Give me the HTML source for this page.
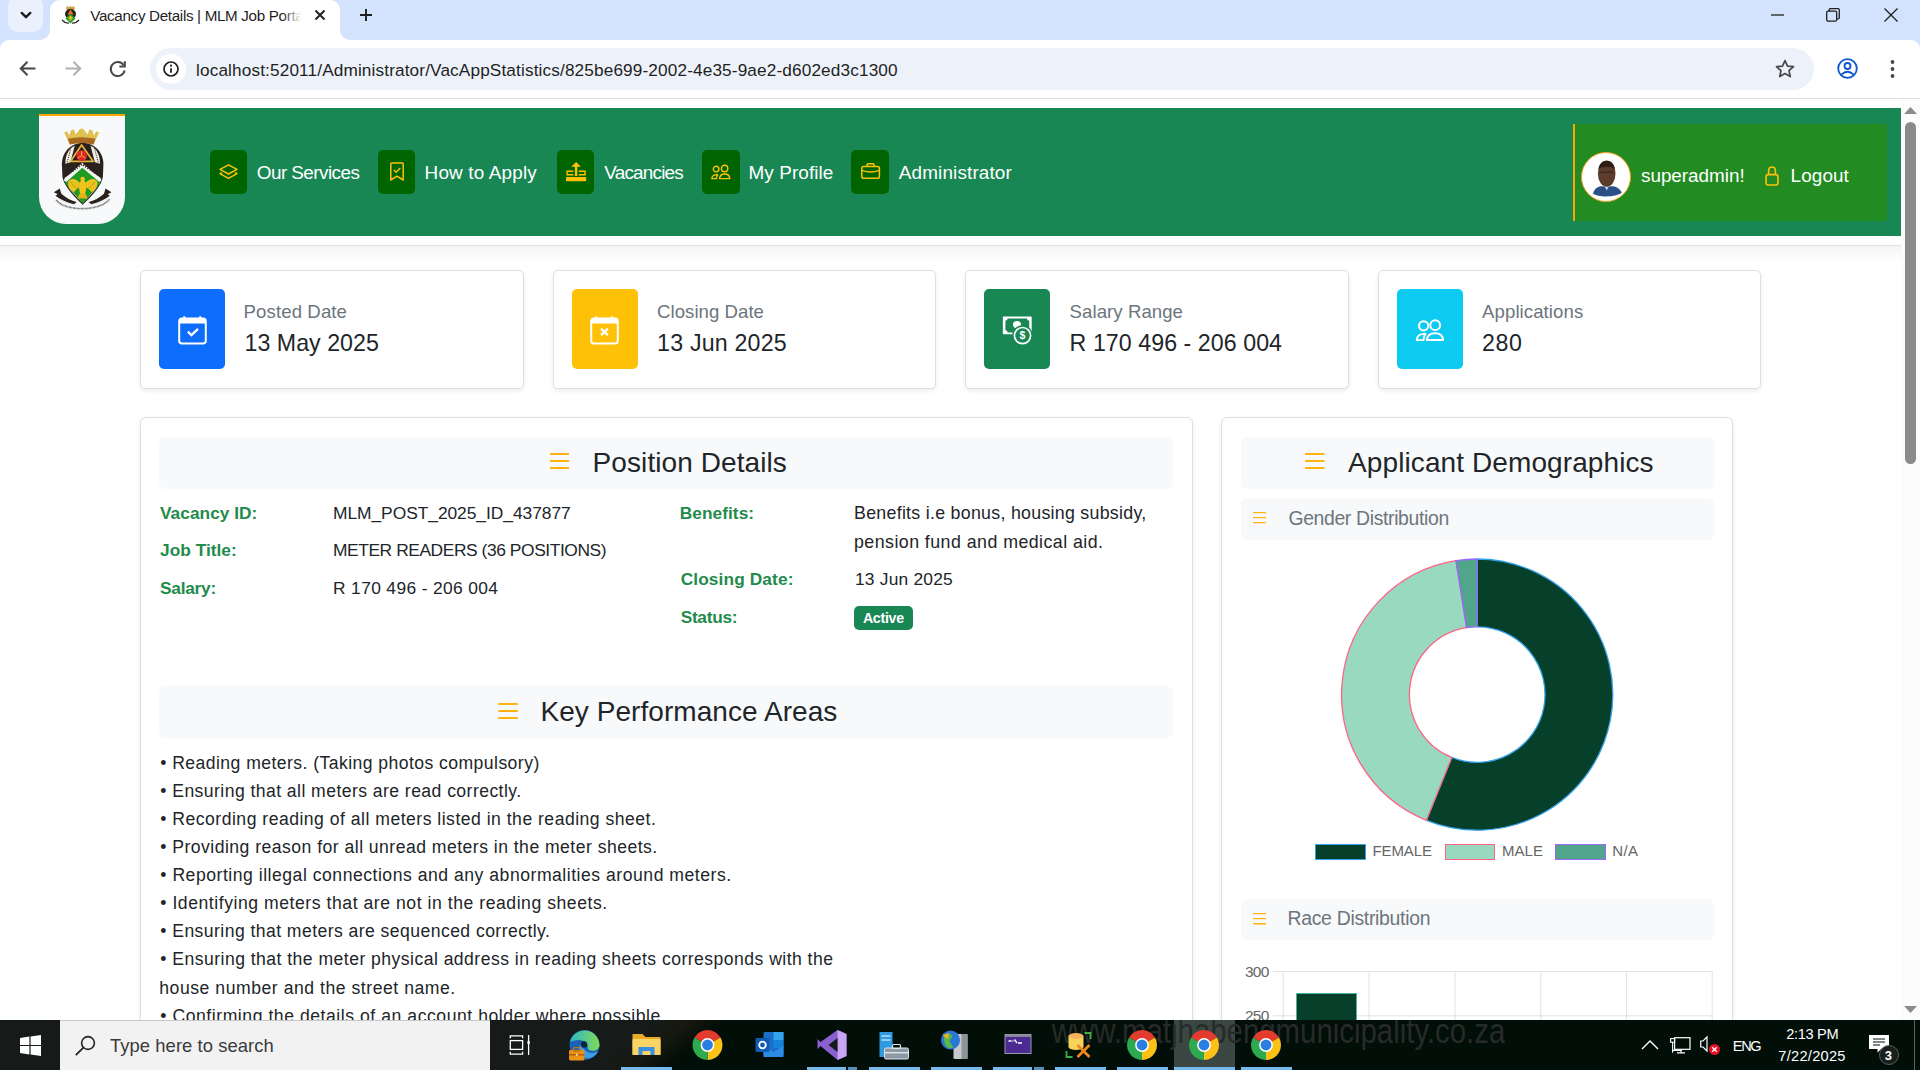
<!DOCTYPE html>
<html lang="en"><head><meta charset="utf-8"><title>Vacancy Details | MLM Job Portal</title>
<style>
*{box-sizing:border-box;margin:0;padding:0}
html,body{width:1920px;height:1070px;overflow:hidden;background:#fff}
body{position:relative;font-family:"Liberation Sans",sans-serif}
.t{position:absolute;white-space:nowrap;font-family:"Liberation Sans",sans-serif}
.a{position:absolute}
svg{position:absolute;overflow:visible}
</style></head>
<body>
<div class="a" id="navbar" style="left:0;top:108px;width:1901px;height:128px;background:#198754"></div>
<div class="a" style="left:0;top:245px;width:1901px;height:1px;background:#dfe2e6"></div>
<div class="a" style="left:0;top:246px;width:1901px;height:16px;background:linear-gradient(#f4f4f5,#fff)"></div>
<div class="a" id="logo" style="left:39px;top:114px;width:86px;height:110px;background:#f8f9fa;border-top:2px solid #ffa500;border-radius:0 0 27px 27px"></div>
<svg id="crest" style="left:40px;top:115px" width="85" height="110" viewBox="0 0 827 1070"><path d="M235 170 L262 158 L287 200 L300 150 L330 138 L347 190 L385 140 L405 128 L425 140 L463 190 L480 138 L510 150 L523 200 L548 158 L575 170 L520 288 Q405 255 290 288Z" fill="#dfc050"/><path d="M270 232 Q405 200 540 232 L520 288 Q405 255 290 288Z" fill="#a9681f"/><path d="M213 480 C213 360 300 272 415 272 C530 272 617 360 617 480 L612 600 Q596 705 415 872 Q234 705 218 600Z" fill="#2a211d"/><path d="M246 475 Q244 385 300 322 L338 300 L296 460Z" fill="#f3f0e8"/><path d="M584 475 Q586 385 530 322 L492 300 L534 460Z" fill="#f3f0e8"/><path d="M300 322 L262 470 M530 322 L568 470" stroke="#2a211d" stroke-width="9" stroke-dasharray="12 10" fill="none"/><path d="M238 612 L410 492 L592 612 Q580 700 415 856 Q250 700 238 612Z" fill="#f6f6f4"/><path d="M236 640 L410 478 L594 640" stroke="#f6f6f4" stroke-width="20" stroke-dasharray="15 11" fill="none"/><path d="M405 292 L518 452 H296Z" fill="none" stroke="#e3b53b" stroke-width="17" stroke-linejoin="round"/><circle cx="405" cy="395" r="52" fill="#e3262c"/><path d="M405 352 V395 L368 420 M405 395 L442 420" stroke="#f0c23c" stroke-width="9" fill="none"/><path d="M412 512 L590 662 L415 862 L244 662Z" fill="#1f9b22"/><path d="M398 668 C352 618 300 606 274 650 C268 702 298 742 332 748 C352 722 380 704 398 704Z" fill="#e9c31d"/><path d="M432 668 C478 618 530 606 558 650 C564 702 534 742 500 748 C480 722 452 704 432 704Z" fill="#e9c31d"/><ellipse cx="415" cy="705" rx="34" ry="78" fill="#f0c419"/><circle cx="415" cy="622" r="22" fill="#f0c419"/><path d="M383 765 H447 L462 812 H368Z" fill="#e2b417"/><path d="M300 650 C320 690 345 710 370 715 M532 650 C512 690 487 710 462 715" stroke="#c4950f" stroke-width="8" fill="none"/><path d="M135 752 L192 715 L208 765 C250 805 305 832 358 846 L330 868 C260 850 200 825 150 785 L172 772Z" fill="#2a211d"/><path d="M695 752 L638 715 L622 765 C580 805 525 832 472 846 L500 868 C570 850 630 825 680 785 L658 772Z" fill="#2a211d"/><path d="M128 815 C220 962 610 962 702 805 M168 802 C252 905 578 905 664 796" stroke="#c9c9c9" stroke-width="3" fill="none"/><path d="M158 826 C245 940 585 940 676 818" stroke="#555" stroke-width="15" stroke-dasharray="8 5" fill="none"/></svg>
<div class="a" style="left:210px;top:150px;width:37px;height:44px;border-radius:5px;background:#006400"></div>
<svg style="left:219.4px;top:164.1px" width="19" height="15" viewBox="0 0 19 15"><path d="M9.5 0.8 L18 5.4 L9.5 10 L1 5.4Z M3 8.6 L1 9.7 L9.5 14.3 L18 9.7 L16 8.6" fill="none" stroke="#ffc107" stroke-width="1.5" stroke-linejoin="round"/></svg>
<span id="t0" class="t" style="left:256.8px;top:162px;font-size:18.9px;line-height:21px;color:#fff;letter-spacing:-0.557px;">Our Services</span>
<div class="a" style="left:378px;top:150px;width:37px;height:44px;border-radius:5px;background:#006400"></div>
<svg style="left:388.9px;top:162.1px" width="16" height="19" viewBox="0 0 16 19"><path d="M2.5 1 H13.5 Q14.2 1 14.2 1.8 V18 L8 14.2 L1.8 18 V1.8 Q1.8 1 2.5 1Z" fill="none" stroke="#ffc107" stroke-width="1.5" stroke-linejoin="round"/><path d="M4.9 8 L7.1 10.2 L11.3 5.9" fill="none" stroke="#ffc107" stroke-width="1.5"/></svg>
<span id="t1" class="t" style="left:424.6px;top:162px;font-size:18.9px;line-height:21px;color:#fff;letter-spacing:0.177px;">How to Apply</span>
<div class="a" style="left:557px;top:150px;width:37px;height:44px;border-radius:5px;background:#006400"></div>
<svg style="left:565.8px;top:162.0px" width="20.2" height="19.2" viewBox="0 0 20.2 19.2"><path d="M10.1 0 L14.9 4.7 H11.3 V14 H8.9 V4.7 H5.3Z" fill="#ffc107"/><path d="M7.4 9.3 H1.1 V12.7 H7.4 M12.8 9.3 H19.1 V12.7 H12.8" fill="none" stroke="#ffc107" stroke-width="1.4"/><rect x="0" y="14.9" width="20.2" height="4.3" rx="1" fill="#ffc107"/></svg>
<span id="t2" class="t" style="left:604.3px;top:162px;font-size:18.9px;line-height:21px;color:#fff;letter-spacing:-0.789px;">Vacancies</span>
<div class="a" style="left:702px;top:150px;width:38px;height:44px;border-radius:5px;background:#006400"></div>
<svg style="left:711.4px;top:163.6px" width="20" height="16" viewBox="0 0 20 16"><circle cx="5.1" cy="5.1" r="2.8" fill="none" stroke="#ffc107" stroke-width="1.4"/><circle cx="13.6" cy="4.5" r="3.2" fill="none" stroke="#ffc107" stroke-width="1.4"/><path d="M8.6 14.6 C8.8 11.6 10.8 10 13.7 10 C16.6 10 18.6 11.6 18.8 14.6Z" fill="none" stroke="#ffc107" stroke-width="1.4" stroke-linejoin="round"/><path d="M6.4 10.7 C3 10.7 1 12.2 0.8 14.6 H5.6 C5.6 13 5.9 11.8 6.8 10.7Z" fill="none" stroke="#ffc107" stroke-width="1.3" stroke-linejoin="round"/></svg>
<span id="t3" class="t" style="left:748.5px;top:162px;font-size:18.9px;line-height:21px;color:#fff;letter-spacing:0.092px;">My Profile</span>
<div class="a" style="left:851px;top:150px;width:38px;height:44px;border-radius:5px;background:#006400"></div>
<svg style="left:860.9px;top:163.0px" width="19" height="16" viewBox="0 0 19 16"><rect x="0.8" y="3.6" width="17.6" height="11.6" rx="1.8" fill="none" stroke="#ffc107" stroke-width="1.5"/><path d="M6.2 3.4 V1.6 Q6.2 0.8 7 0.8 H12.2 Q13 0.8 13 1.6 V3.4" fill="none" stroke="#ffc107" stroke-width="1.5"/><path d="M1 7.4 Q9.6 10.6 18.2 7.4" fill="none" stroke="#ffc107" stroke-width="1.4"/></svg>
<span id="t4" class="t" style="left:898.8px;top:162px;font-size:18.9px;line-height:21px;color:#fff;letter-spacing:0.143px;">Administrator</span>
<div class="a" id="userbox" style="left:1573px;top:124px;width:314px;height:97px;background:#228b22;border-left:2px solid #ffa500"></div>
<div class="a" style="left:1581px;top:152px;width:50px;height:50px;border-radius:25px;background:#fff;border:1.5px solid #f0a31c"></div>
<svg style="left:1590px;top:158px" width="32" height="40" viewBox="0 0 32 40"><path d="M3 35.5 C5 28.6 10 27.2 16.7 28.8 C23 27.2 29 28.6 31.8 34.6 C27 39.4 8 39.8 3 35.5Z" fill="#2b4f86"/><path d="M13.4 26 L16.7 32.5 L20 26Z" fill="#cfd5e2"/><ellipse cx="16.7" cy="15.8" rx="8.8" ry="13" fill="#5c3c2d"/><path d="M8.4 11 C9.4 5.4 12.6 2.8 16.7 2.8 C20.8 2.8 24 5.4 25 11 C21 8 12.4 8 8.4 11Z" fill="#2c1d17"/><path d="M10 14.2 H23.4" stroke="#33221a" stroke-width="1"/></svg>
<span id="t5" class="t" style="left:1641.0px;top:165px;font-size:18.9px;line-height:21px;color:#fff;letter-spacing:-0.031px;">superadmin!</span>
<svg style="left:1765px;top:166px" width="14" height="20" viewBox="0 0 14 20"><rect x="1" y="8.6" width="12" height="10.4" rx="2.2" fill="none" stroke="#ffc107" stroke-width="1.6"/><path d="M3.6 8.6 V5 Q3.6 1 7 1 Q10.4 1 10.4 5 V8.6" fill="none" stroke="#ffc107" stroke-width="1.6"/></svg>
<span id="t6" class="t" style="left:1790.6px;top:165px;font-size:18.9px;line-height:21px;color:#fff;letter-spacing:0.094px;">Logout</span>
<div class="a" style="left:140.0px;top:270px;width:383.5px;height:119px;background:#fff;border:1px solid #dcdfe3;border-radius:5px;box-shadow:0 2px 5px rgba(0,0,0,.075)"></div>
<div class="a" style="left:159.0px;top:289px;width:66px;height:80px;border-radius:5px;background:#0d6efd"></div>
<svg style="left:177.7px;top:315.8px" width="28.6" height="28.4" viewBox="0 0 28.6 28.4"><path d="M6.3 0.2 V2.4 M22.2 0.2 V2.4" stroke="#fff" stroke-width="2"/><rect x="1.2" y="2.6" width="26.6" height="24.9" rx="2.8" fill="none" stroke="#fff" stroke-width="2"/><path d="M1.2 7.4 V5.2 Q1.2 2.6 4 2.6 H25 Q27.8 2.6 27.8 5.2 V7.4Z" fill="#fff"/><path d="M9.9 15.6 L13.4 19.1 L20 12.8" fill="none" stroke="#fff" stroke-width="2.3"/></svg>
<span id="t7" class="t" style="left:243.6px;top:301px;font-size:18.6px;line-height:21px;color:#6c757d;letter-spacing:0.101px;">Posted Date</span>
<span id="t8" class="t" style="left:244.6px;top:330px;font-size:23.2px;line-height:26px;color:#212529;letter-spacing:0.013px;">13 May 2025</span>
<div class="a" style="left:552.5px;top:270px;width:383.5px;height:119px;background:#fff;border:1px solid #dcdfe3;border-radius:5px;box-shadow:0 2px 5px rgba(0,0,0,.075)"></div>
<div class="a" style="left:571.5px;top:289px;width:66px;height:80px;border-radius:5px;background:#ffc107"></div>
<svg style="left:590.2px;top:315.8px" width="28.6" height="28.4" viewBox="0 0 28.6 28.4"><path d="M6.3 0.2 V2.4 M22.2 0.2 V2.4" stroke="#fff" stroke-width="2"/><rect x="1.2" y="2.6" width="26.6" height="24.9" rx="2.8" fill="none" stroke="#fff" stroke-width="2"/><path d="M1.2 7.4 V5.2 Q1.2 2.6 4 2.6 H25 Q27.8 2.6 27.8 5.2 V7.4Z" fill="#fff"/><path d="M11.1 12.7 L17.9 19.1 M17.9 12.7 L11.1 19.1" fill="none" stroke="#fff" stroke-width="2.3"/></svg>
<span id="t9" class="t" style="left:657.1px;top:301px;font-size:18.6px;line-height:21px;color:#6c757d;letter-spacing:0.035px;">Closing Date</span>
<span id="t10" class="t" style="left:657.1px;top:330px;font-size:23.2px;line-height:26px;color:#212529;letter-spacing:0.195px;">13 Jun 2025</span>
<div class="a" style="left:965.0px;top:270px;width:383.5px;height:119px;background:#fff;border:1px solid #dcdfe3;border-radius:5px;box-shadow:0 2px 5px rgba(0,0,0,.075)"></div>
<div class="a" style="left:984.0px;top:289px;width:66px;height:80px;border-radius:5px;background:#198754"></div>
<svg style="left:1002.0px;top:315.5px" width="30" height="29" viewBox="0 0 30 29"><rect x="0.85" y="0.5" width="28.85" height="17.7" rx="0.8" fill="#fff"/><path d="M5.6 2.4 H25 Q25 4.6 27.2 4.6 V14.2 Q25 14.2 25 16.4 H5.6 Q5.6 14.2 3.4 14.2 V4.6 Q5.6 4.6 5.6 2.4Z" fill="#198754"/><ellipse cx="15" cy="8.6" rx="4" ry="3.7" fill="#fff"/><circle cx="20.5" cy="19.6" r="10.3" fill="#198754"/><circle cx="20.5" cy="19.6" r="8.1" fill="none" stroke="#fff" stroke-width="1.7"/><text x="20.5" y="23.4" text-anchor="middle" font-family="Liberation Sans, sans-serif" font-weight="700" font-size="10.5" fill="#fff">$</text></svg>
<span id="t11" class="t" style="left:1069.6px;top:301px;font-size:18.6px;line-height:21px;color:#6c757d;letter-spacing:0.062px;">Salary Range</span>
<span id="t12" class="t" style="left:1069.6px;top:330px;font-size:23.2px;line-height:26px;color:#212529;letter-spacing:0.054px;">R 170 496 - 206 004</span>
<div class="a" style="left:1377.5px;top:270px;width:383.5px;height:119px;background:#fff;border:1px solid #dcdfe3;border-radius:5px;box-shadow:0 2px 5px rgba(0,0,0,.075)"></div>
<div class="a" style="left:1396.5px;top:289px;width:66px;height:80px;border-radius:5px;background:#0dcaf0"></div>
<svg style="left:1415.0px;top:318.5px" width="29" height="23" viewBox="0 0 29 23"><circle cx="8.6" cy="6.8" r="4.6" fill="none" stroke="#fff" stroke-width="2"/><circle cx="20.2" cy="6.2" r="4.9" fill="none" stroke="#fff" stroke-width="2"/><path d="M11.8 21.1 C12.2 16.6 15.4 14.2 20 14.2 C24.6 14.2 27.8 16.6 28.1 21.1Z" fill="none" stroke="#fff" stroke-width="2" stroke-linejoin="round"/><path d="M9.4 14.9 C4.6 14.9 2 17.4 1.7 21.1 H8.6 C8.6 18.6 9.2 16.6 10.4 14.9Z" fill="none" stroke="#fff" stroke-width="1.9" stroke-linejoin="round"/></svg>
<span id="t13" class="t" style="left:1482.1px;top:301px;font-size:18.6px;line-height:21px;color:#6c757d;letter-spacing:0.076px;">Applications</span>
<span id="t14" class="t" style="left:1482.1px;top:330px;font-size:23.2px;line-height:26px;color:#212529;letter-spacing:0.504px;">280</span>
<div class="a" id="panelL" style="left:140px;top:417px;width:1052.5px;height:700px;background:#fff;border:1px solid #dcdfe3;border-radius:6px;box-shadow:0 2px 5px rgba(0,0,0,.075)"></div>
<div class="a" style="left:159px;top:437px;width:1014px;height:51.5px;background:#f8f9fa;border-radius:6px"></div>
<svg style="left:0;top:0" width="1" height="1"><path d="M550.0 454.00 H569.0 M550.0 461.00 H569.0 M550.0 468.00 H569.0 " stroke="#ffb30f" stroke-width="2" fill="none"/></svg>
<span id="t15" class="t" style="left:592.6px;top:447px;font-size:28px;line-height:31px;color:#212529;letter-spacing:0.081px;">Position Details</span>
<span id="t16" class="t" style="left:160.0px;top:503px;font-size:17.3px;line-height:20px;color:#1f8b4c;font-weight:700;letter-spacing:0.033px;">Vacancy ID:</span>
<span id="t17" class="t" style="left:333.0px;top:503px;font-size:17.4px;line-height:20px;color:#212529;letter-spacing:-0.051px;">MLM_POST_2025_ID_437877</span>
<span id="t18" class="t" style="left:160.0px;top:540px;font-size:17.3px;line-height:20px;color:#1f8b4c;font-weight:700;letter-spacing:0.029px;">Job Title:</span>
<span id="t19" class="t" style="left:333.0px;top:540px;font-size:17.4px;line-height:20px;color:#212529;letter-spacing:-0.428px;">METER READERS (36 POSITIONS)</span>
<span id="t20" class="t" style="left:160.0px;top:578px;font-size:17.3px;line-height:20px;color:#1f8b4c;font-weight:700;letter-spacing:-0.248px;">Salary:</span>
<span id="t21" class="t" style="left:333.0px;top:578px;font-size:17.4px;line-height:20px;color:#212529;letter-spacing:0.356px;">R 170 496 - 206 004</span>
<span id="t22" class="t" style="left:679.7px;top:503px;font-size:17.3px;line-height:20px;color:#1f8b4c;font-weight:700;letter-spacing:0.053px;">Benefits:</span>
<span id="t23" class="t" style="left:854.0px;top:503px;font-size:17.8px;line-height:20px;color:#212529;letter-spacing:0.282px;">Benefits i.e bonus, housing subsidy,</span>
<span id="t24" class="t" style="left:854.0px;top:532px;font-size:17.8px;line-height:20px;color:#212529;letter-spacing:0.456px;">pension fund and medical aid.</span>
<span id="t25" class="t" style="left:680.7px;top:569px;font-size:17.3px;line-height:20px;color:#1f8b4c;font-weight:700;letter-spacing:0.115px;">Closing Date:</span>
<span id="t26" class="t" style="left:855.0px;top:569px;font-size:17.4px;line-height:20px;color:#212529;letter-spacing:0.194px;">13 Jun 2025</span>
<span id="t27" class="t" style="left:680.7px;top:607px;font-size:17.3px;line-height:20px;color:#1f8b4c;font-weight:700;letter-spacing:-0.302px;">Status:</span>
<div class="a" style="left:854px;top:606px;width:59px;height:24px;border-radius:5px;background:#198754"></div>
<span id="t28" class="t" style="left:862.9px;top:610px;font-size:14.2px;line-height:16px;color:#fff;font-weight:700;letter-spacing:-0.279px;">Active</span>
<div class="a" style="left:159px;top:686px;width:1014px;height:51.5px;background:#f8f9fa;border-radius:6px"></div>
<svg style="left:0;top:0" width="1" height="1"><path d="M498.3 704.00 H517.8 M498.3 711.00 H517.8 M498.3 718.00 H517.8 " stroke="#ffb30f" stroke-width="2" fill="none"/></svg>
<span id="t29" class="t" style="left:540.5px;top:696px;font-size:28px;line-height:31px;color:#212529;letter-spacing:0.058px;">Key Performance Areas</span>
<span id="t30" class="t" style="left:160.3px;top:753px;font-size:17.6px;line-height:20px;color:#212529;letter-spacing:0.437px;">• Reading meters. (Taking photos compulsory)</span>
<span id="t31" class="t" style="left:160.3px;top:781px;font-size:17.6px;line-height:20px;color:#212529;letter-spacing:0.435px;">• Ensuring that all meters are read correctly.</span>
<span id="t32" class="t" style="left:160.3px;top:809px;font-size:17.6px;line-height:20px;color:#212529;letter-spacing:0.488px;">• Recording reading of all meters listed in the reading sheet.</span>
<span id="t33" class="t" style="left:160.3px;top:837px;font-size:17.6px;line-height:20px;color:#212529;letter-spacing:0.470px;">• Providing reason for all unread meters in the meter sheets.</span>
<span id="t34" class="t" style="left:160.3px;top:865px;font-size:17.6px;line-height:20px;color:#212529;letter-spacing:0.516px;">• Reporting illegal connections and any abnormalities around meters.</span>
<span id="t35" class="t" style="left:160.3px;top:893px;font-size:17.6px;line-height:20px;color:#212529;letter-spacing:0.545px;">• Identifying meters that are not in the reading sheets.</span>
<span id="t36" class="t" style="left:160.3px;top:921px;font-size:17.6px;line-height:20px;color:#212529;letter-spacing:0.434px;">• Ensuring that meters are sequenced correctly.</span>
<span id="t37" class="t" style="left:160.3px;top:949px;font-size:17.6px;line-height:20px;color:#212529;letter-spacing:0.459px;">• Ensuring that the meter physical address in reading sheets corresponds with the</span>
<span id="t38" class="t" style="left:159.3px;top:978px;font-size:17.6px;line-height:20px;color:#212529;letter-spacing:0.536px;">house number and the street name.</span>
<span id="t39" class="t" style="left:160.3px;top:1006px;font-size:17.6px;line-height:20px;color:#212529;letter-spacing:0.546px;">• Confirming the details of an account holder where possible</span>
<div class="a" id="panelR" style="left:1221px;top:417px;width:511.5px;height:700px;background:#fff;border:1px solid #dcdfe3;border-radius:6px;box-shadow:0 2px 5px rgba(0,0,0,.075)"></div>
<div class="a" style="left:1241px;top:437px;width:473px;height:51.5px;background:#f8f9fa;border-radius:6px"></div>
<svg style="left:0;top:0" width="1" height="1"><path d="M1305.0 454.00 H1324.5 M1305.0 461.00 H1324.5 M1305.0 468.00 H1324.5 " stroke="#ffb30f" stroke-width="2" fill="none"/></svg>
<span id="t40" class="t" style="left:1348.1px;top:447px;font-size:28px;line-height:31px;color:#212529;letter-spacing:0.096px;">Applicant Demographics</span>
<div class="a" style="left:1241px;top:498px;width:473px;height:41.5px;background:#f8f9fa;border-radius:6px"></div>
<svg style="left:0;top:0" width="1" height="1"><path d="M1253.0 512.55 H1266.0 M1253.0 517.55 H1266.0 M1253.0 522.55 H1266.0 " stroke="#ffb30f" stroke-width="1.3" fill="none"/></svg>
<span id="t41" class="t" style="left:1288.4px;top:507px;font-size:19.4px;line-height:22px;color:#6c757d;letter-spacing:-0.348px;">Gender Distribution</span>
<svg id="donut" style="left:0;top:0" width="1" height="1"><path d="M1477.20 559.00 A135.6 135.6 0 1 1 1426.40 820.33 L1451.80 757.46 A67.8 67.8 0 1 0 1477.20 626.80Z" fill="#063f2a" stroke="#36a2eb" stroke-width="1.3" stroke-linejoin="round"/><path d="M1426.40 820.33 A135.6 135.6 0 0 1 1455.99 560.67 L1466.59 627.63 A67.8 67.8 0 0 0 1451.80 757.46Z" fill="#98d9c0" stroke="#ff6384" stroke-width="1.3" stroke-linejoin="round"/><path d="M1455.99 560.67 A135.6 135.6 0 0 1 1477.20 559.00 L1477.20 626.80 A67.8 67.8 0 0 0 1466.59 627.63Z" fill="#50a58a" stroke="#9966ff" stroke-width="1.3" stroke-linejoin="round"/></svg>
<div class="a" style="left:1315.3px;top:843.5px;width:50.5px;height:16px;background:#063f2a;border:1.3px solid #36a2eb"></div>
<span id="t42" class="t" style="left:1372.4px;top:842px;font-size:15px;line-height:17px;color:#666;letter-spacing:-0.082px;">FEMALE</span>
<div class="a" style="left:1444.8px;top:843.5px;width:50.5px;height:16px;background:#98d9c0;border:1.3px solid #ff6384"></div>
<span id="t43" class="t" style="left:1501.9px;top:842px;font-size:15px;line-height:17px;color:#666;letter-spacing:0.053px;">MALE</span>
<div class="a" style="left:1555.3px;top:843.5px;width:50.5px;height:16px;background:#50a58a;border:1.3px solid #9966ff"></div>
<span id="t44" class="t" style="left:1612.3px;top:842px;font-size:15px;line-height:17px;color:#666;letter-spacing:0.400px;">N/A</span>
<div class="a" style="left:1241px;top:899px;width:473px;height:41px;background:#f8f9fa;border-radius:6px"></div>
<svg style="left:0;top:0" width="1" height="1"><path d="M1253.0 913.55 H1266.0 M1253.0 918.65 H1266.0 M1253.0 923.75 H1266.0 " stroke="#ffb30f" stroke-width="1.3" fill="none"/></svg>
<span id="t45" class="t" style="left:1287.5px;top:907px;font-size:19.4px;line-height:22px;color:#6c757d;letter-spacing:-0.291px;">Race Distribution</span>
<svg style="left:0;top:0" width="1" height="1"><path d="M1283.2 971 V1030 M1369.1 971 V1030 M1455.0 971 V1030 M1540.8 971 V1030 M1626.5 971 V1030 M1712.2 971 V1030 M1273 971.5 H1712.7 M1273 1015.8 H1712.7" stroke="#e2e2e2" stroke-width="1" fill="none"/></svg>
<div class="a" style="left:1296.4px;top:992.6px;width:60.4px;height:40px;background:#063f2a;border:1px solid #4bb0a0;border-bottom:0"></div>
<span id="t46" class="t" style="left:1245.0px;top:963px;font-size:15.5px;line-height:17px;color:#666;letter-spacing:-0.770px;">300</span>
<span id="t47" class="t" style="left:1245.0px;top:1007px;font-size:15.5px;line-height:17px;color:#666;letter-spacing:-0.770px;">250</span>
<div class="a" id="tabstrip" style="left:0;top:0;width:1920px;height:40px;background:#d3e3fd"></div>
<div class="a" style="left:8px;top:-4px;width:35px;height:36px;border-radius:10px;background:#eaf1fd"></div>
<svg style="left:19px;top:11px" width="14" height="9" viewBox="0 0 14 9"><path d="M2.7 1.9 L7 6.2 L11.3 1.9" fill="none" stroke="#1f1f1f" stroke-width="2.4" stroke-linecap="round" stroke-linejoin="round"/></svg>
<div class="a" style="left:50px;top:0;width:290px;height:40px;background:#fff;border-radius:10px 10px 0 0"></div>
<svg style="left:40px;top:30px" width="10" height="10" viewBox="0 0 10 10"><path d="M10 0 V10 H0 A10 10 0 0 0 10 0Z" fill="#fff"/></svg>
<svg style="left:340px;top:30px" width="10" height="10" viewBox="0 0 10 10"><path d="M0 0 V10 H10 A10 10 0 0 1 0 0Z" fill="#fff"/></svg>
<svg style="left:61px;top:5px" width="19" height="20" viewBox="0 0 19 20"><path d="M5 3 L6.5 1 L8 2.5 L9.5 0.8 L11 2.5 L12.5 1 L14 3 L13 5 H6Z" fill="#c9a13a"/><ellipse cx="9.5" cy="9" rx="5.5" ry="5" fill="#2b2320"/><path d="M9.5 4.5 L12.5 9.5 H6.5Z" fill="#e8732c"/><path d="M9.5 8.5 L14.5 13.5 L9.5 18.5 L4.5 13.5Z" fill="#2da02d"/><path d="M7.5 13 H11.5 M9.5 11 V15.5" stroke="#f0c419" stroke-width="1.6"/><path d="M1 15 Q4 18.5 8 18 M18 15 Q15 18.5 11 18" stroke="#2b2320" stroke-width="1.2" fill="none"/></svg>
<span id="t48" class="t" style="left:90.3px;top:7px;font-size:15.2px;line-height:17px;color:#1f1f1f;letter-spacing:-0.323px;">Vacancy Details | MLM Job Porta</span>
<div class="a" style="left:282px;top:4px;width:28px;height:26px;background:linear-gradient(90deg,rgba(255,255,255,0),#fff 70%)"></div>
<svg style="left:314px;top:9px" width="12" height="12" viewBox="0 0 12 12"><path d="M1.5 1.5 L10.5 10.5 M10.5 1.5 L1.5 10.5" stroke="#1f1f1f" stroke-width="1.9"/></svg>
<svg style="left:359px;top:8px" width="14" height="14" viewBox="0 0 14 14"><path d="M7 1 V13 M1 7 H13" stroke="#1f1f1f" stroke-width="1.9"/></svg>
<svg style="left:1771px;top:14px" width="13" height="2" viewBox="0 0 13 2"><path d="M0 1 H13" stroke="#1f1f1f" stroke-width="1.3"/></svg>
<svg style="left:1826px;top:8px" width="14" height="14" viewBox="0 0 14 14"><rect x="0.7" y="3.2" width="10" height="10" rx="1.5" fill="none" stroke="#1f1f1f" stroke-width="1.3"/><path d="M3.2 3 V2 Q3.2 0.7 4.5 0.7 H12 Q13.3 0.7 13.3 2 V9.5 Q13.3 10.8 12 10.8 H11" fill="none" stroke="#1f1f1f" stroke-width="1.3"/></svg>
<svg style="left:1884px;top:8px" width="14" height="14" viewBox="0 0 14 14"><path d="M0.5 0.5 L13.5 13.5 M13.5 0.5 L0.5 13.5" stroke="#1f1f1f" stroke-width="1.3"/></svg>
<div class="a" id="toolbar" style="left:0;top:40px;width:1920px;height:59px;background:#fff;border-bottom:1px solid #dadce0"></div>
<svg style="left:0;top:40px" width="9" height="9" viewBox="0 0 9 9"><path d="M0 0 H9 A9 9 0 0 0 0 9Z" fill="#d3e3fd"/></svg>
<svg style="left:1911px;top:40px" width="9" height="9" viewBox="0 0 9 9"><path d="M9 0 H0 A9 9 0 0 1 9 9Z" fill="#d3e3fd"/></svg>
<svg style="left:19px;top:60px" width="18" height="17" viewBox="0 0 18 17"><path d="M16.5 8.5 H2.5 M8.5 1.8 L1.8 8.5 L8.5 15.2" fill="none" stroke="#474747" stroke-width="2" stroke-linejoin="miter"/></svg>
<svg style="left:64px;top:60px" width="18" height="17" viewBox="0 0 18 17"><path d="M1.5 8.5 H15.5 M9.5 1.8 L16.2 8.5 L9.5 15.2" fill="none" stroke="#b0b0b0" stroke-width="2"/></svg>
<svg style="left:109px;top:60px" width="18" height="18" viewBox="0 0 18 18"><path d="M14.6 5.2 A7 7 0 1 0 15.6 10.5" fill="none" stroke="#474747" stroke-width="2"/><path d="M15.8 1.2 V6.6 H10.4" fill="none" stroke="#474747" stroke-width="2"/></svg>
<div class="a" id="omnibox" style="left:150px;top:48px;width:1664px;height:42px;border-radius:21px;background:#edf2fa"></div>
<div class="a" style="left:156px;top:54px;width:30px;height:30px;border-radius:15px;background:#fff"></div>
<svg style="left:163px;top:61px" width="16" height="16" viewBox="0 0 16 16"><circle cx="8" cy="8" r="7" fill="none" stroke="#1f1f1f" stroke-width="1.7"/><path d="M8 7.2 V11.8" stroke="#1f1f1f" stroke-width="1.8"/><circle cx="8" cy="4.7" r="1.1" fill="#1f1f1f"/></svg>
<span id="t49" class="t" style="left:196.0px;top:60px;font-size:17.2px;line-height:20px;color:#1f1f1f;letter-spacing:0.139px;">localhost:52011/Administrator/VacAppStatistics/825be699-2002-4e35-9ae2-d602ed3c1300</span>
<svg style="left:1775px;top:59px" width="20" height="19" viewBox="0 0 20 19"><path d="M10 1.6 L12.5 7.1 L18.5 7.7 L14 11.7 L15.3 17.6 L10 14.5 L4.7 17.6 L6 11.7 L1.5 7.7 L7.5 7.1Z" fill="none" stroke="#474747" stroke-width="1.7" stroke-linejoin="round"/></svg>
<svg style="left:1837px;top:58px" width="21" height="21" viewBox="0 0 21 21"><circle cx="10.5" cy="10.5" r="9.3" fill="none" stroke="#0b57d0" stroke-width="1.8"/><circle cx="10.5" cy="8" r="3" fill="none" stroke="#0b57d0" stroke-width="1.8"/><path d="M4.3 16.6 Q10.5 10.8 16.7 16.6" fill="none" stroke="#0b57d0" stroke-width="1.8"/></svg>
<svg style="left:1890px;top:59px" width="5" height="20" viewBox="0 0 5 20"><circle cx="2.5" cy="3" r="1.9" fill="#474747"/><circle cx="2.5" cy="10" r="1.9" fill="#474747"/><circle cx="2.5" cy="17" r="1.9" fill="#474747"/></svg>
<div class="a" id="vscroll" style="left:1901px;top:100px;width:19px;height:920px;background:#fcfcfc"></div>
<svg style="left:1904px;top:107px" width="13" height="7" viewBox="0 0 13 7"><path d="M0 7 L6.5 0 L13 7Z" fill="#8b8b8b"/></svg>
<svg style="left:1904px;top:1006px" width="13" height="7" viewBox="0 0 13 7"><path d="M0 0 L6.5 7 L13 0Z" fill="#8b8b8b"/></svg>
<div class="a" style="left:1905px;top:122px;width:11px;height:342px;border-radius:5.5px;background:#8b8b8b"></div>
<div class="a" id="taskbar" style="left:0;top:1020px;width:1920px;height:50px;background:#020e08"></div>
<svg style="left:0;top:1020px" width="720" height="50" viewBox="0 0 720 50"><defs><linearGradient id="tbg" x1="645" y1="7.6" x2="673" y2="42.4" gradientUnits="userSpaceOnUse"><stop offset="0" stop-color="#161b19"/><stop offset="0.5" stop-color="#17190f"/><stop offset="1" stop-color="#020e08"/></linearGradient></defs><path d="M0 0 H720 V50 H0Z" fill="url(#tbg)"/></svg>
<svg style="left:20px;top:1034.5px" width="21" height="21" viewBox="0 0 21 21"><path d="M0 3 L9.4 1.6 V9.9 H0Z M10.6 1.4 L21 0 V9.9 H10.6Z M0 11.1 H9.4 V19.4 L0 18Z M10.6 11.1 H21 V21 L10.6 19.6Z" fill="#fff"/></svg>
<div class="a" style="left:60px;top:1020px;width:430px;height:50px;background:#f2f2f2;border-top:1px solid #c8c8c8"></div>
<svg style="left:75px;top:1035px" width="21" height="21" viewBox="0 0 21 21"><circle cx="13" cy="8" r="6.4" fill="none" stroke="#222" stroke-width="1.6"/><path d="M8.4 12.6 L0.8 20.2" stroke="#222" stroke-width="1.8"/></svg>
<span id="t50" class="t" style="left:110.0px;top:1035px;font-size:18.4px;line-height:21px;color:#3a3a3a;letter-spacing:0.066px;">Type here to search</span>
<div class="a" style="left:1174px;top:1020px;width:61px;height:50px;background:#3b4742"></div>
<span id="t51" class="t" style="left:1051.5px;top:1011px;font-size:35.5px;line-height:40px;color:#262b29;transform-origin:-1.00px 50%;transform:scaleX(0.8277);clip-path:inset(9px 0 0 0);">www.matjhabengmunicipality.co.za</span>
<svg style="left:509px;top:1034px" width="22" height="22" viewBox="0 0 22 22"><path d="M1.3 4.2 V1.8 H13.6 V4.2 M1.3 17.8 V20.2 H13.6 V17.8" fill="none" stroke="#fff" stroke-width="1.3"/><rect x="1.3" y="6.6" width="12.3" height="8.8" fill="none" stroke="#fff" stroke-width="1.3"/><path d="M19.6 1 V21" stroke="#fff" stroke-width="1.3"/><rect x="18.4" y="7.2" width="2.4" height="2.6" fill="#fff"/></svg>
<svg style="left:0;top:0" width="1" height="1"><defs><linearGradient id="eg1" x1="0" y1="0" x2="1" y2="0"><stop offset="0" stop-color="#2fb6c9"/><stop offset="1" stop-color="#7fda55"/></linearGradient></defs><circle cx="584.5" cy="1045" r="15" fill="#1b62b5"/><path d="M569.9 1042 A15 15 0 0 1 599.5 1045 C599.5 1050 593.5 1052 589.0 1050 C586.5 1048.5 589.5 1045 585.5 1042 C580.5 1038.5 573.5 1040 569.9 1042Z" fill="url(#eg1)"/><path d="M581.5 1044 C576.5 1047 578.5 1056 587.5 1058.5 C592.5 1058 596.5 1055 598.0 1051.5 C592.5 1054.5 583.5 1053 581.5 1044Z" fill="#3aa0ea"/><circle cx="584.0" cy="1044.5" r="3.2" fill="#10233c"/><rect x="569.0" y="1050" width="15.5" height="10.5" rx="1.4" fill="#e8941a"/><rect x="573.5" y="1047.6" width="6.5" height="3.4" rx="1" fill="none" stroke="#c8700f" stroke-width="1.4"/><rect x="569.0" y="1054" width="15.5" height="1.5" fill="#b55f0c"/><rect x="575.9" y="1053.8" width="1.8" height="2" fill="#ffe08a"/></svg>
<svg style="left:0;top:0" width="1" height="1"><path d="M632.5 1034 H642.5 L645.5 1037 H660.5 V1055 H632.5Z" fill="#e9a928"/><rect x="632.5" y="1039" width="28" height="16" rx="1" fill="#fbd466"/><path d="M638.5 1055 V1047 H654.5 V1055 H650.5 V1051 H642.5 V1055Z" fill="#3a8fe0"/></svg>
<svg style="left:0;top:0" width="1" height="1"><path d="M707.5 1045 L694.51 1037.50 A15 15 0 0 1 720.49 1037.50Z" fill="#e33b2e"/><path d="M707.5 1045 L720.49 1037.50 A15 15 0 0 1 707.50 1060.00Z" fill="#fbc116"/><path d="M707.5 1045 L707.50 1060.00 A15 15 0 0 1 694.51 1037.50Z" fill="#2da94f"/><circle cx="707.5" cy="1045" r="6.90" fill="#fff"/><circle cx="707.5" cy="1045" r="5.40" fill="#2a7de1"/></svg>
<svg style="left:0;top:0" width="1" height="1"><rect x="763.5" y="1032" width="20" height="24" rx="1.5" fill="#1a6fc9"/><rect x="773.5" y="1032" width="10" height="8" fill="#35a4ee"/><rect x="773.5" y="1040" width="10" height="8" fill="#1583d8"/><path d="M763.5 1046 L773.5 1052 L783.5 1046 V1057 H763.5Z" fill="#2b8be6"/><rect x="755.5" y="1038" width="14" height="14" rx="1.5" fill="#0f5cb2"/><circle cx="762.5" cy="1045" r="3.3" fill="none" stroke="#fff" stroke-width="1.8"/></svg>
<svg style="left:0;top:0" width="1" height="1"><path d="M837.5 1030 L846.5 1034 V1056 L837.5 1060 L820.5 1046 L817.5 1049 V1039 L820.5 1042Z" fill="#8a5fd0"/><path d="M837.5 1030 L846.5 1034 V1056 L837.5 1060Z" fill="#c9a4f5"/><path d="M837.5 1038 L828.5 1045 L837.5 1052Z" fill="#141a17"/></svg>
<svg style="left:0;top:0" width="1" height="1"><rect x="879.5" y="1032" width="13" height="25" fill="#2f9ae0"/><rect x="881.5" y="1035" width="9" height="2" fill="#8fd0f7"/><rect x="881.5" y="1039" width="9" height="2" fill="#8fd0f7"/><rect x="884.5" y="1048" width="24" height="11" rx="1.5" fill="#8c9aa5" stroke="#dfe6ea" stroke-width="1"/><rect x="892.5" y="1044.5" width="8" height="4" rx="1" fill="none" stroke="#dfe6ea" stroke-width="1.2"/><rect x="884.5" y="1052" width="24" height="1.4" fill="#dfe6ea"/></svg>
<svg style="left:0;top:0" width="1" height="1"><rect x="953.5" y="1034" width="14" height="25" rx="1" fill="#c6c9cc"/><rect x="961.5" y="1034" width="6" height="25" fill="#8e9498"/><circle cx="950.5" cy="1040" r="9.5" fill="#2a78d4"/><path d="M944.5 1035 C950.5 1031 954.5 1037 950.5 1039 C947.5 1043 954.5 1045 952.5 1048 C946.5 1050 942.5 1043 944.5 1035Z" fill="#57b947"/><path d="M942.5 1035 L949.5 1033 L947.5 1039Z" fill="#f2b21d"/></svg>
<svg style="left:0;top:0" width="1" height="1"><rect x="1005.0" y="1034.5" width="26" height="19" fill="#4b2a91" stroke="#9a9aa6" stroke-width="1"/><rect x="1005.0" y="1034.5" width="26" height="2.4" fill="#8c8c9a"/><path d="M1008.5 1041 h3 m1 0 h1 m1 -1.5 l2.5 3.5 m1 0 h4" stroke="#fff" stroke-width="1.3" fill="none"/></svg>
<svg style="left:0;top:0" width="1" height="1"><path d="M1068.5 1036 V1047 A7.5 3 0 0 0 1083.5 1047 V1036Z" fill="#f6d35b"/><ellipse cx="1076.0" cy="1036" rx="7.5" ry="3" fill="#f3b35e"/><path d="M1084.5 1033 H1090.5 V1039 M1066.5 1051 V1057 H1072.5" fill="none" stroke="#3fae49" stroke-width="1.8"/><path d="M1077.5 1057 L1089.5 1045 M1089.5 1057 L1077.5 1045" stroke="#f08a1c" stroke-width="2.6"/></svg>
<svg style="left:0;top:0" width="1" height="1"><path d="M1142.0 1045 L1129.01 1037.50 A15 15 0 0 1 1154.99 1037.50Z" fill="#e33b2e"/><path d="M1142.0 1045 L1154.99 1037.50 A15 15 0 0 1 1142.00 1060.00Z" fill="#fbc116"/><path d="M1142.0 1045 L1142.00 1060.00 A15 15 0 0 1 1129.01 1037.50Z" fill="#2da94f"/><circle cx="1142.0" cy="1045" r="6.90" fill="#fff"/><circle cx="1142.0" cy="1045" r="5.40" fill="#2a7de1"/></svg>
<svg style="left:0;top:0" width="1" height="1"><path d="M1204.0 1045 L1191.01 1037.50 A15 15 0 0 1 1216.99 1037.50Z" fill="#e33b2e"/><path d="M1204.0 1045 L1216.99 1037.50 A15 15 0 0 1 1204.00 1060.00Z" fill="#fbc116"/><path d="M1204.0 1045 L1204.00 1060.00 A15 15 0 0 1 1191.01 1037.50Z" fill="#2da94f"/><circle cx="1204.0" cy="1045" r="6.90" fill="#fff"/><circle cx="1204.0" cy="1045" r="5.40" fill="#2a7de1"/></svg>
<svg style="left:0;top:0" width="1" height="1"><path d="M1266.0 1045 L1253.01 1037.50 A15 15 0 0 1 1278.99 1037.50Z" fill="#e33b2e"/><path d="M1266.0 1045 L1278.99 1037.50 A15 15 0 0 1 1266.00 1060.00Z" fill="#fbc116"/><path d="M1266.0 1045 L1266.00 1060.00 A15 15 0 0 1 1253.01 1037.50Z" fill="#2da94f"/><circle cx="1266.0" cy="1045" r="6.90" fill="#fff"/><circle cx="1266.0" cy="1045" r="5.40" fill="#2a7de1"/></svg>
<div class="a" style="left:621px;top:1067px;width:51px;height:3px;background:#76b9ed"></div>
<div class="a" style="left:807px;top:1067px;width:39px;height:3px;background:#76b9ed"></div>
<div class="a" style="left:869px;top:1067px;width:51px;height:3px;background:#76b9ed"></div>
<div class="a" style="left:931px;top:1067px;width:51px;height:3px;background:#76b9ed"></div>
<div class="a" style="left:993px;top:1067px;width:39px;height:3px;background:#76b9ed"></div>
<div class="a" style="left:1055px;top:1067px;width:51px;height:3px;background:#76b9ed"></div>
<div class="a" style="left:1116.7px;top:1067px;width:51.0px;height:3px;background:#76b9ed"></div>
<div class="a" style="left:1174px;top:1067px;width:61px;height:3px;background:#76b9ed"></div>
<div class="a" style="left:1241px;top:1067px;width:51px;height:3px;background:#76b9ed"></div>
<div class="a" style="left:847.5px;top:1067px;width:9.5px;height:3px;background:#5a8fb8"></div>
<div class="a" style="left:1034px;top:1067px;width:9.5px;height:3px;background:#5a8fb8"></div>
<svg style="left:1641px;top:1040px" width="18" height="10" viewBox="0 0 18 10"><path d="M1 9 L9 1 L17 9" fill="none" stroke="#fff" stroke-width="1.4"/></svg>
<svg style="left:1670px;top:1037px" width="21" height="17" viewBox="0 0 21 17"><rect x="4.6" y="0.7" width="15.4" height="11.6" fill="none" stroke="#fff" stroke-width="1.2"/><rect x="0.6" y="1.6" width="4" height="3.6" fill="none" stroke="#fff" stroke-width="1.1"/><path d="M2.6 5.2 V15.8 M2.6 13.4 H12 M11 12.4 V15.8 M7 15.9 H15" stroke="#fff" stroke-width="1.1" fill="none"/></svg>
<svg style="left:1700px;top:1036px" width="9" height="16" viewBox="0 0 9 16"><path d="M0.7 5 H3 L7 1 V15 L3 11 H0.7Z" fill="none" stroke="#fff" stroke-width="1.2"/></svg>
<svg style="left:1709px;top:1044px" width="11" height="11" viewBox="0 0 11 11"><circle cx="5.5" cy="5.5" r="5.5" fill="#e81123"/><path d="M3.2 3.2 L7.8 7.8 M7.8 3.2 L3.2 7.8" stroke="#fff" stroke-width="1.3"/></svg>
<span id="t52" class="t" style="left:1732.8px;top:1038px;font-size:14.6px;line-height:16px;color:#fff;letter-spacing:-1.387px;">ENG</span>
<span id="t53" class="t" style="left:1786.2px;top:1026px;font-size:14.6px;line-height:16px;color:#fff;letter-spacing:-0.315px;">2:13 PM</span>
<span id="t54" class="t" style="left:1778.3px;top:1048px;font-size:14.6px;line-height:16px;color:#fff;letter-spacing:0.274px;">7/22/2025</span>
<svg style="left:1869px;top:1035px" width="21" height="18" viewBox="0 0 21 18"><path d="M0 0 H20 V14 H12 L8.5 17.5 V14 H0Z" fill="#fff"/><path d="M4 4 H16 M4 7 H16 M4 10 H11" stroke="#02100a" stroke-width="1.2"/></svg>
<div class="a" style="left:1878.5px;top:1045px;width:20px;height:20px;border-radius:10px;background:#1a1e1d;border:1px solid #55605b"></div>
<span id="t55" class="t" style="left:1884.7px;top:1048px;font-size:13px;line-height:15px;color:#fff;font-weight:700;">3</span>
<div class="a" style="left:1914px;top:1020px;width:1px;height:50px;background:#5a635f"></div>
</body></html>
